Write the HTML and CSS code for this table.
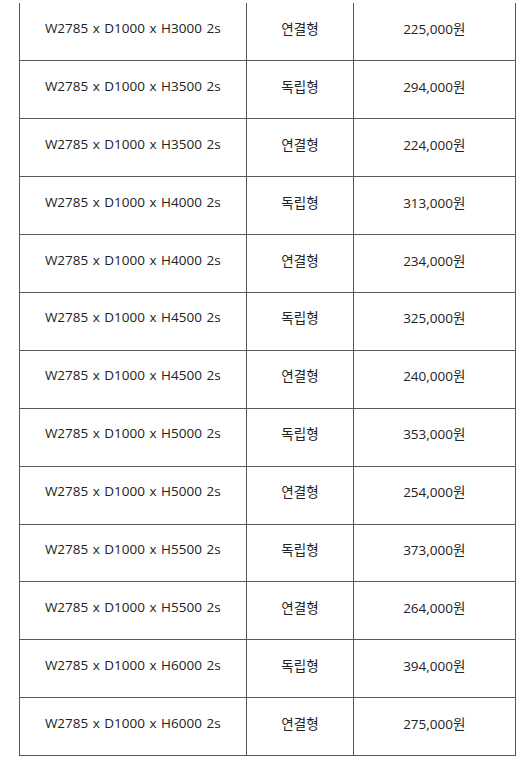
FILE: index.html
```html
<!DOCTYPE html>
<html lang="ko">
<head>
<meta charset="utf-8">
<title>가격표</title>
<link rel="stylesheet" href="styles.css">
</head>
<body>
<div class="wrap">
<table class="price-table">
<colgroup>
<col class="c-size">
<col class="c-type">
<col class="c-price">
</colgroup>
<tbody>
<tr><td>W2785 x D1000 x H3000 2s</td><td>연결형</td><td>225,000원</td></tr>
<tr><td>W2785 x D1000 x H3500 2s</td><td>독립형</td><td>294,000원</td></tr>
<tr><td>W2785 x D1000 x H3500 2s</td><td>연결형</td><td>224,000원</td></tr>
<tr><td>W2785 x D1000 x H4000 2s</td><td>독립형</td><td>313,000원</td></tr>
<tr><td>W2785 x D1000 x H4000 2s</td><td>연결형</td><td>234,000원</td></tr>
<tr><td>W2785 x D1000 x H4500 2s</td><td>독립형</td><td>325,000원</td></tr>
<tr><td>W2785 x D1000 x H4500 2s</td><td>연결형</td><td>240,000원</td></tr>
<tr><td>W2785 x D1000 x H5000 2s</td><td>독립형</td><td>353,000원</td></tr>
<tr><td>W2785 x D1000 x H5000 2s</td><td>연결형</td><td>254,000원</td></tr>
<tr><td>W2785 x D1000 x H5500 2s</td><td>독립형</td><td>373,000원</td></tr>
<tr><td>W2785 x D1000 x H5500 2s</td><td>연결형</td><td>264,000원</td></tr>
<tr><td>W2785 x D1000 x H6000 2s</td><td>독립형</td><td>394,000원</td></tr>
<tr><td>W2785 x D1000 x H6000 2s</td><td>연결형</td><td>275,000원</td></tr>
</tbody>
</table>
</div>
</body>
</html>
```
FILE: styles.css
```css
html, body {
  margin: 0;
  padding: 0;
  background: #ffffff;
}

.wrap {
  padding: 3px 0 0 18.5px;
}

.price-table {
  border-collapse: collapse;
  table-layout: fixed;
  width: 496px;
  font-family: "Open Sans", "Noto Sans CJK KR", sans-serif;
  font-size: 13.5px;
  word-spacing: 1px;
  color: #222222;
}

.c-size { width: 227.5px; }
.c-type { width: 107px; }
.c-price { width: 161.5px; }

.price-table tr {
  height: 57.9px;
}

.price-table td {
  border: 1px solid #595959;
  text-align: center;
  vertical-align: middle;
  padding: 0 0 8px 0;
  white-space: nowrap;
}

.price-table tr:first-child td {
  border-top: none;
}
```
